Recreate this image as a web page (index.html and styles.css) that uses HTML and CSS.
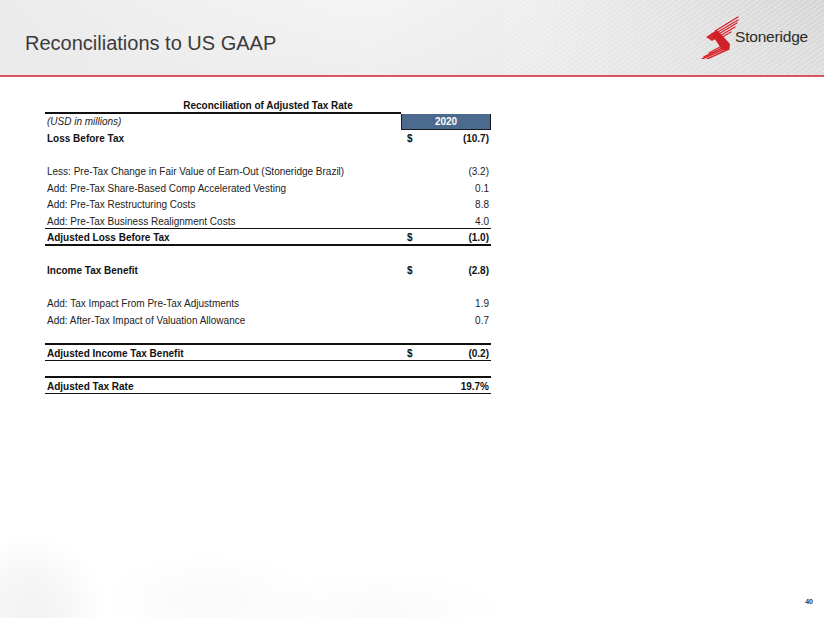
FILE: index.html
```html
<!DOCTYPE html>
<html lang="en">
<head>
<meta charset="utf-8">
<title>Reconciliations to US GAAP</title>
<link rel="stylesheet" href="styles.css">
</head>
<body>
<div class="page">
  <header class="header">
    <h1 class="title">Reconciliations to US GAAP</h1>
    <div class="logo">
      <svg class="logo-mark" viewBox="0 0 40 44" width="40" height="44" aria-hidden="true">
        <g stroke="#d8262f" stroke-linecap="round" fill="none" stroke-width="1.4">
          <line x1="15" y1="16" x2="38" y2="2"/>
          <line x1="16" y1="18" x2="38" y2="5"/>
          <line x1="17" y1="20" x2="37" y2="8"/>
          <line x1="18" y1="22" x2="35" y2="12"/>
          <line x1="19" y1="24" x2="31" y2="17"/>
          <line x1="27" y1="28" x2="9" y2="38"/>
          <line x1="28" y1="30" x2="4" y2="42"/>
          <line x1="29" y1="32" x2="2" y2="44"/>
          <line x1="29" y1="34" x2="7" y2="44"/>
        </g>
        <polygon points="6,22 17,15 21,21 12,26" fill="#d8262f"/>
        <polygon points="11,18 19,17 30,29 29,35 22,35" fill="#cf1f29"/>
      </svg>
      <span class="logo-text">Stoneridge</span>
    </div>
  </header>

  <main class="content">
    <section class="recon">
      <div class="recon-title">Reconciliation of Adjusted Tax Rate</div>
      <div class="row head">
        <div class="label italic">(USD in millions)</div>
        <div class="year">2020</div>
      </div>
      <div class="row bold">
        <div class="label">Loss Before Tax</div>
        <div class="cur">$</div>
        <div class="val">(10.7)</div>
      </div>
      <div class="row blank"></div>
      <div class="row">
        <div class="label">Less: Pre-Tax Change in Fair Value of Earn-Out (Stoneridge Brazil)</div>
        <div class="cur"></div>
        <div class="val">(3.2)</div>
      </div>
      <div class="row">
        <div class="label">Add: Pre-Tax Share-Based Comp Accelerated Vesting</div>
        <div class="cur"></div>
        <div class="val">0.1</div>
      </div>
      <div class="row">
        <div class="label">Add: Pre-Tax Restructuring Costs</div>
        <div class="cur"></div>
        <div class="val">8.8</div>
      </div>
      <div class="row thin">
        <div class="label">Add: Pre-Tax Business Realignment Costs</div>
        <div class="cur"></div>
        <div class="val">4.0</div>
      </div>
      <div class="row bold thick">
        <div class="label">Adjusted Loss Before Tax</div>
        <div class="cur">$</div>
        <div class="val">(1.0)</div>
      </div>
      <div class="row blank"></div>
      <div class="row bold">
        <div class="label">Income Tax Benefit</div>
        <div class="cur">$</div>
        <div class="val">(2.8)</div>
      </div>
      <div class="row blank"></div>
      <div class="row">
        <div class="label">Add: Tax Impact From Pre-Tax Adjustments</div>
        <div class="cur"></div>
        <div class="val">1.9</div>
      </div>
      <div class="row">
        <div class="label">Add: After-Tax Impact of Valuation Allowance</div>
        <div class="cur"></div>
        <div class="val">0.7</div>
      </div>
      <div class="row blank thick"></div>
      <div class="row bold thin">
        <div class="label">Adjusted Income Tax Benefit</div>
        <div class="cur">$</div>
        <div class="val">(0.2)</div>
      </div>
      <div class="row blank thick"></div>
      <div class="row bold thin">
        <div class="label">Adjusted Tax Rate</div>
        <div class="cur"></div>
        <div class="val">19.7%</div>
      </div>
    </section>
  </main>

  <footer class="footer">40</footer>
</div>
</body>
</html>
```

FILE: styles.css
```css
* { box-sizing: border-box; }

html, body {
  margin: 0;
  padding: 0;
  background: #ffffff;
}

.page {
  width: 824px;
  height: 618px;
  display: flex;
  flex-direction: column;
  font-family: "Liberation Sans", Arial, sans-serif;
  color: #1a1a1a;
  background:
    radial-gradient(circle at 30px 610px, rgba(0,0,0,0.05) 0, rgba(0,0,0,0.03) 40px, rgba(0,0,0,0) 75px),
    radial-gradient(ellipse 140px 60px at 210px 600px, rgba(0,0,0,0.025), rgba(0,0,0,0) 80%),
    radial-gradient(ellipse 160px 50px at 380px 610px, rgba(0,0,0,0.02), rgba(0,0,0,0) 80%),
    #ffffff;
  overflow: hidden;
}

/* Header band */
.header {
  height: 77px;
  flex: none;
  display: flex;
  justify-content: space-between;
  align-items: flex-start;
  padding: 0 16px 0 25px;
  border-bottom: 2px solid #d65466;
  background:
    repeating-linear-gradient(-35deg, rgba(255,255,255,0) 0 3px, rgba(255,255,255,0.3) 3px 4px) right top / 320px 75px no-repeat,
    linear-gradient(to bottom, rgba(255,255,255,0.0), rgba(232,232,232,0.45)),
    linear-gradient(to right, #ebebeb 0%, #f1f1f1 25%, #f4f4f4 45%, #eeeeee 65%, #e0e0e0 85%, #d5d5d5 100%);
}

.title {
  margin: 31px 0 0 0;
  font-family: "Liberation Sans", Arial, sans-serif;
  font-weight: normal;
  font-size: 20px;
  line-height: 24px;
  color: #3b3b3b;
}

.logo {
  display: flex;
  align-items: flex-start;
  margin-top: 14px;
}

.logo-mark {
  display: block;
  margin-top: 1px;
}

.logo-text {
  font-family: "Liberation Sans", Arial, sans-serif;
  font-size: 15.5px;
  line-height: 18px;
  margin: 14px 0 0 -5px;
  color: #2b2b2b;
  letter-spacing: -0.2px;
}

/* Table */
.content {
  flex: none;
  padding: 21px 0 0 45px;
}

.recon {
  width: 446px;
}

.recon-title {
  height: 14px;
  line-height: 15px;
  font-size: 10px;
  font-weight: bold;
  text-align: center;
  color: #111;
}

.row {
  display: grid;
  grid-template-columns: 356px 30px 60px;
  height: 16.5px;
  line-height: 17px;
  font-size: 10px;
  color: #222;
  white-space: nowrap;
}

.row .label {
  padding-left: 2px;
}

.row .cur {
  padding-left: 6px;
  font-weight: bold;
  color: #111;
}

.row .val {
  text-align: right;
  padding-right: 2px;
}

.row.bold {
  font-weight: bold;
  color: #111;
}

.row.thin {
  border-bottom: 1px solid #111;
}

.row.thick {
  border-bottom: 2px solid #111;
}

.row.head {
  grid-template-columns: 356px 90px;
  height: 18px;
  line-height: 16px;
}

.row.head .label {
  border-top: 2px solid #111;
  font-style: italic;
  color: #222;
}

.row.head .year {
  margin-top: 2px;
  height: 16px;
  line-height: 15px;
  background: #4c6a8d;
  border: 1px solid #1a1a1a;
  border-top: none;
  color: #ffffff;
  font-weight: bold;
  text-align: center;
}

.footer {
  margin-top: auto;
  text-align: right;
  padding: 0 11px 12px 0;
  font-size: 7px;
  font-weight: bold;
  color: #333;
  line-height: 8px;
}
```
